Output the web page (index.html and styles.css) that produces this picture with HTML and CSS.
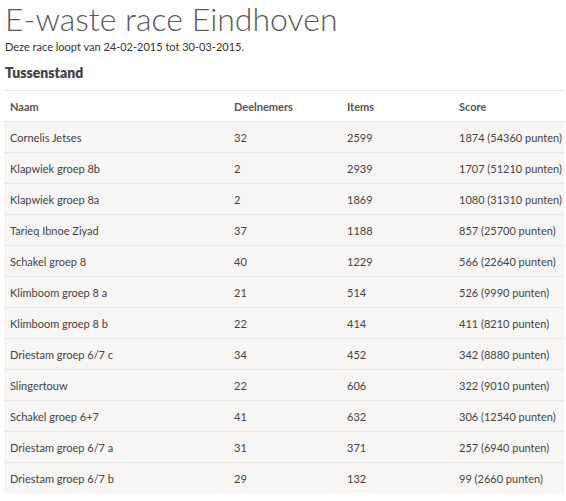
FILE: index.html
```html
<!DOCTYPE html>
<html lang="nl">
<head>
<meta charset="utf-8">
<title>E-waste race Eindhoven</title>
<link rel="stylesheet" href="styles.css">
</head>
<body>
<main class="page">
  <h1 class="title">E-waste race Eindhoven</h1>
  <p class="intro">Deze race loopt van 24-02-2015 tot 30-03-2015.</p>
  <h2 class="section">Tussenstand</h2>
  <table class="standings">
    <thead>
      <tr><th class="c-name">Naam</th><th class="c-num">Deelnemers</th><th class="c-num">Items</th><th class="c-score">Score</th></tr>
    </thead>
    <tbody>
      <tr><td>Cornelis Jetses</td><td>32</td><td>2599</td><td>1874 (54360 punten)</td></tr>
      <tr><td>Klapwiek groep 8b</td><td>2</td><td>2939</td><td>1707 (51210 punten)</td></tr>
      <tr><td>Klapwiek groep 8a</td><td>2</td><td>1869</td><td>1080 (31310 punten)</td></tr>
      <tr><td>Tarieq Ibnoe Ziyad</td><td>37</td><td>1188</td><td>857 (25700 punten)</td></tr>
      <tr><td>Schakel groep 8</td><td>40</td><td>1229</td><td>566 (22640 punten)</td></tr>
      <tr><td>Klimboom groep 8 a</td><td>21</td><td>514</td><td>526 (9990 punten)</td></tr>
      <tr><td>Klimboom groep 8 b</td><td>22</td><td>414</td><td>411 (8210 punten)</td></tr>
      <tr><td>Driestam groep 6/7 c</td><td>34</td><td>452</td><td>342 (8880 punten)</td></tr>
      <tr><td>Slingertouw</td><td>22</td><td>606</td><td>322 (9010 punten)</td></tr>
      <tr><td>Schakel groep 6+7</td><td>41</td><td>632</td><td>306 (12540 punten)</td></tr>
      <tr><td>Driestam groep 6/7 a</td><td>31</td><td>371</td><td>257 (6940 punten)</td></tr>
      <tr><td>Driestam groep 6/7 b</td><td>29</td><td>132</td><td>99 (2660 punten)</td></tr>
    </tbody>
  </table>
</main>
</body>
</html>
```
FILE: styles.css
```css
html, body {
  margin: 0;
  padding: 0;
  background: #fff;
}
.page {
  padding: 0 1px 0 4px;
  font-family: Lato, "Open Sans", sans-serif;
  color: #444;
}
.title {
  margin: 0 0 0 1px;
  padding-top: 1px;
  font-size: 32px;
  line-height: 35px;
  font-weight: 300;
  color: #5a5a5a;
}
.intro {
  margin: 3px 0 0 1px;
  font-size: 11px;
  line-height: 16px;
  color: #333;
}
.section {
  margin: 9px 0 0 1px;
  font-size: 14px;
  line-height: 18px;
  font-weight: 800;
  color: #444;
}
.standings {
  margin-top: 8px;
  width: 561px;
  border-collapse: collapse;
  font-size: 11px;
  table-layout: fixed;
}
.standings th,
.standings td {
  text-align: left;
  padding: 0 0 0 6px;
  height: 30px;
  border-top: 1px solid #e9e7e3;
  vertical-align: middle;
}
.standings th {
  font-weight: 700;
  color: #555;
}
.standings td {
  color: #444;
  background: #f7f6f4;
}
.c-name { width: 218px; }
.c-num { width: 107px; }
.c-score { width: auto; }
.standings th:nth-child(2) { width: 107px; }
.standings th:nth-child(3) { width: 106px; }
```
